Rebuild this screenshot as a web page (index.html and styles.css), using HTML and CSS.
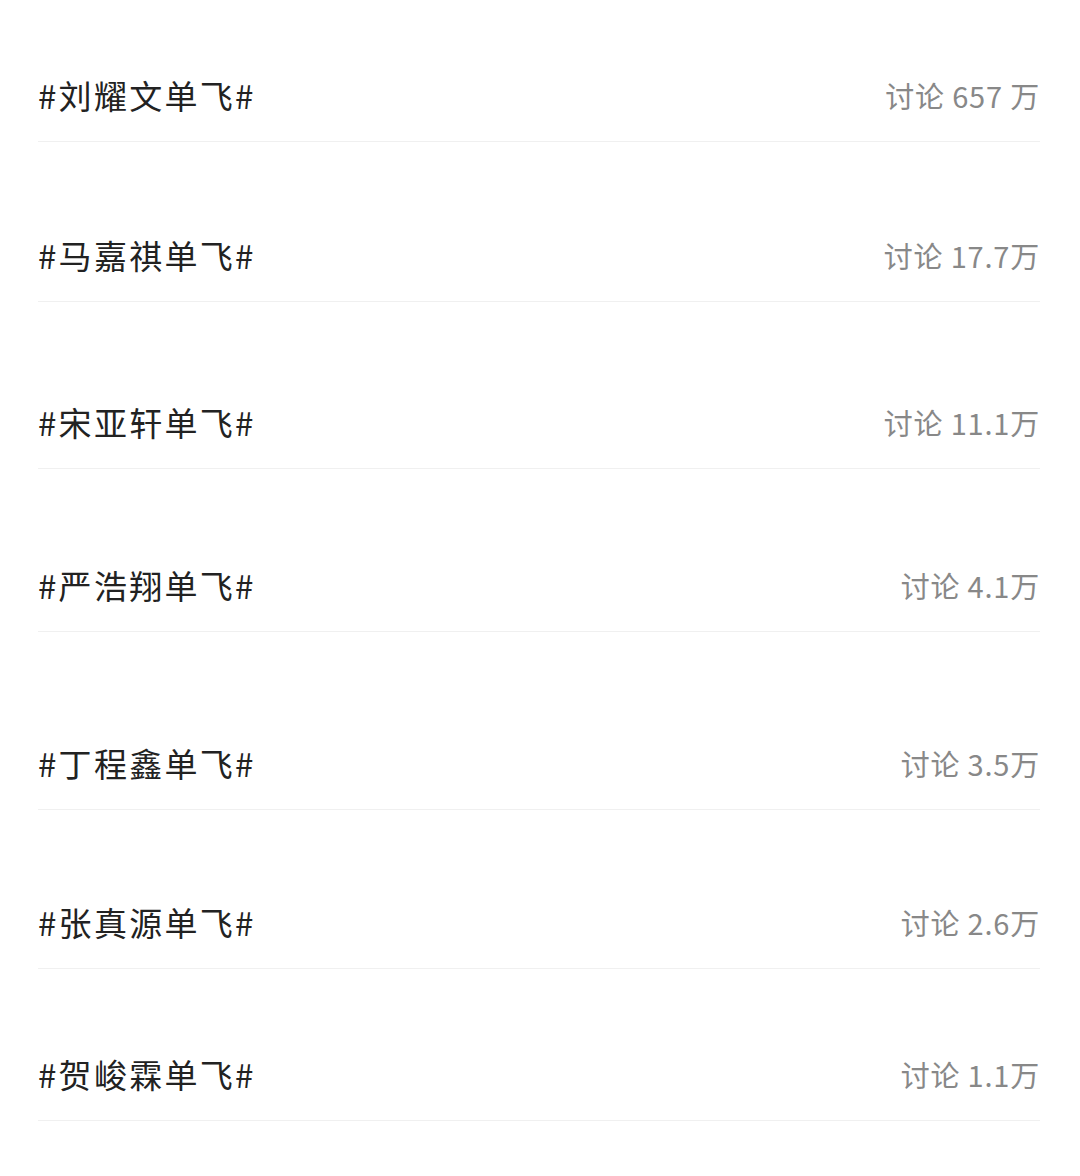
FILE: index.html
```html
<!DOCTYPE html>
<html lang="zh-CN">
<head>
    <meta charset="UTF-8">
    <meta name="viewport" content="width=device-width, initial-scale=1.0">
    <title>单飞话题</title>
    <link rel="stylesheet" href="styles.css">
</head>
<body>
    <div class="topic-list">
        <div class="topic-row">
            <span class="topic-name">#刘耀文单飞#</span>
            <span class="topic-count">讨论 657 万</span>
        </div>
        <div class="topic-row">
            <span class="topic-name">#马嘉祺单飞#</span>
            <span class="topic-count">讨论 17.7万</span>
        </div>
        <div class="topic-row">
            <span class="topic-name">#宋亚轩单飞#</span>
            <span class="topic-count">讨论 11.1万</span>
        </div>
        <div class="topic-row">
            <span class="topic-name">#严浩翔单飞#</span>
            <span class="topic-count">讨论 4.1万</span>
        </div>
        <div class="topic-row">
            <span class="topic-name">#丁程鑫单飞#</span>
            <span class="topic-count">讨论 3.5万</span>
        </div>
        <div class="topic-row">
            <span class="topic-name">#张真源单飞#</span>
            <span class="topic-count">讨论 2.6万</span>
        </div>
        <div class="topic-row">
            <span class="topic-name">#贺峻霖单飞#</span>
            <span class="topic-count">讨论 1.1万</span>
        </div>
    </div>
</body>
</html>
```

FILE: styles.css
```css
body {
    margin: 0;
    background-color: #fff;
    font-family: "Noto Sans CJK SC", "Noto Sans", sans-serif;
}
.topic-list {
    padding: 0 40px 0 38px;
}
.topic-row {
    display: flex;
    justify-content: space-between;
    align-items: flex-end;
    box-sizing: border-box;
    padding-bottom: 26px;
    border-bottom: 1px solid #f0f0f0;
}
.topic-row:nth-child(1) { height: 142px; }
.topic-row:nth-child(2) { height: 160px; }
.topic-row:nth-child(3) { height: 167px; }
.topic-row:nth-child(4) { height: 163px; }
.topic-row:nth-child(5) { height: 178px; }
.topic-row:nth-child(6) { height: 159px; }
.topic-row:nth-child(7) { height: 152px; }
.topic-name {
    font-size: 33px;
    line-height: 40px;
    letter-spacing: 2.3px;
    color: #222;
}
.topic-count {
    font-size: 29px;
    line-height: 40px;
    letter-spacing: 0.8px;
    color: #888;
}
```
